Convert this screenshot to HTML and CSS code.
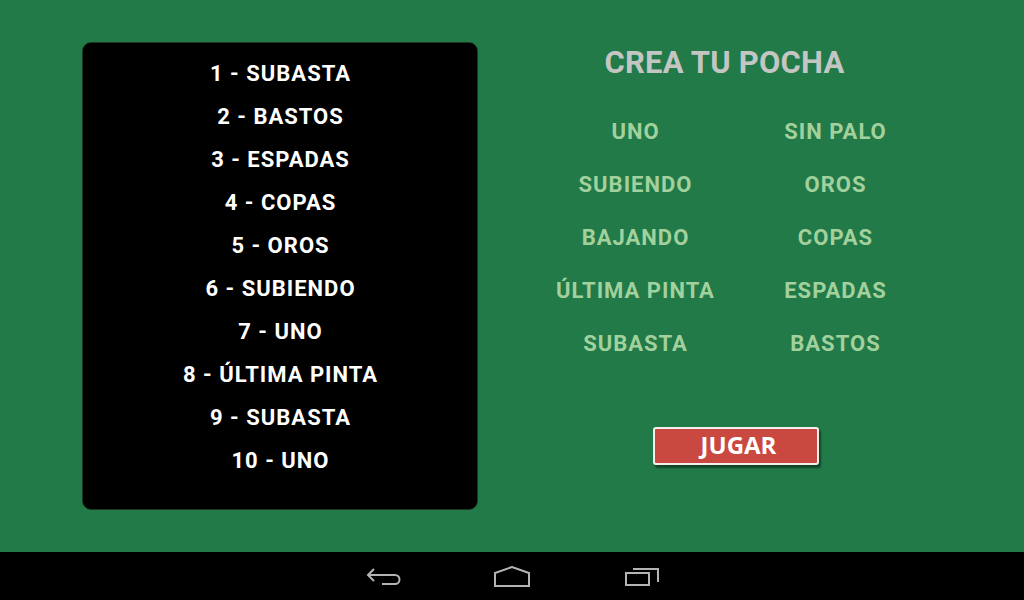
FILE: index.html
```html
<!DOCTYPE html>
<html lang="es">
<head>
<meta charset="utf-8">
<title>Crea tu pocha</title>
<link rel="stylesheet" href="styles.css">
</head>
<body>
<div class="screen">
  <main class="main">
    <section class="panel">
      <div class="item">1 - SUBASTA</div>
      <div class="item">2 - BASTOS</div>
      <div class="item">3 - ESPADAS</div>
      <div class="item">4 - COPAS</div>
      <div class="item">5 - OROS</div>
      <div class="item">6 - SUBIENDO</div>
      <div class="item">7 - UNO</div>
      <div class="item">8 - ÚLTIMA PINTA</div>
      <div class="item">9 - SUBASTA</div>
      <div class="item">10 - UNO</div>
    </section>
    <section class="side">
      <h1 class="title">CREA TU POCHA</h1>
      <div class="options">
        <div class="opt">UNO</div><div class="opt">SIN PALO</div>
        <div class="opt">SUBIENDO</div><div class="opt">OROS</div>
        <div class="opt">BAJANDO</div><div class="opt">COPAS</div>
        <div class="opt">ÚLTIMA PINTA</div><div class="opt">ESPADAS</div>
        <div class="opt">SUBASTA</div><div class="opt">BASTOS</div>
      </div>
      <div class="btn-row"><button class="play">JUGAR</button></div>
    </section>
  </main>
  <nav class="navbar">
    <svg class="nav-icon back" width="36" height="22" viewBox="0 0 36 22">
      <path d="M8 3 L2 9 L8 15 M2 9 H29 A4.5 4.5 0 0 1 29 18 H16" fill="none" stroke="#b4b4b4" stroke-width="2"/>
    </svg>
    <svg class="nav-icon home" width="40" height="22" viewBox="0 0 40 22">
      <path d="M3 7 L20 1 L37 7 V20 H3 Z" fill="none" stroke="#b4b4b4" stroke-width="2" stroke-linejoin="miter"/>
    </svg>
    <svg class="nav-icon recent" width="38" height="22" viewBox="0 0 38 22">
      <rect x="2" y="7" width="23" height="12" fill="none" stroke="#b4b4b4" stroke-width="2"/>
      <path d="M9 3 H34 V16" fill="none" stroke="#b4b4b4" stroke-width="2"/>
    </svg>
  </nav>
</div>
</body>
</html>
```

FILE: styles.css
```css
html, body {
  margin: 0;
  padding: 0;
}
body {
  width: 1024px;
  height: 600px;
  overflow: hidden;
  background: #217a48;
  font-family: Roboto, "Liberation Sans", sans-serif;
}
.screen {
  display: flex;
  flex-direction: column;
  height: 600px;
}
.main {
  height: 552px;
  display: flex;
  padding: 42px 0 0 82px;
  box-sizing: border-box;
}
.panel {
  width: 396px;
  height: 468px;
  box-sizing: border-box;
  background: #000;
  border: 1px solid #1a3a26;
  border-radius: 9px;
  padding-top: 9px;
  display: flex;
  flex-direction: column;
  align-items: center;
}
.item {
  color: #fff;
  font-weight: 700;
  font-size: 22px;
  letter-spacing: 1px;
  padding-left: 1px;
  line-height: 43px;
  height: 43px;
}
.side {
  width: 492px;
  display: flex;
  flex-direction: column;
}
.title {
  margin: 0;
  padding-top: 3px;
  padding-left: 1px;
  text-align: center;
  color: #c4c6c4;
  font-size: 31px;
  letter-spacing: 0.2px;
  font-weight: 700;
  line-height: 36px;
}
.options {
  margin-top: 24px;
  margin-left: 57px;
  width: 400px;
  display: grid;
  grid-template-columns: 200px 200px;
  grid-auto-rows: 53px;
}
.opt {
  text-align: center;
  line-height: 53px;
  padding-left: 1px;
  color: #a2d19d;
  font-size: 22px;
  letter-spacing: 1px;
  font-weight: 700;
}
.btn-row {
  margin-top: 57px;
  padding-left: 175px;
}
.play {
  width: 166px;
  height: 38px;
  box-sizing: border-box;
  background: #c9483f;
  border: 2px solid #f4f0ee;
  border-radius: 3px;
  box-shadow: 2px 3px 2px rgba(0, 0, 0, 0.45);
  color: #fff;
  font-family: "Open Sans", "DejaVu Sans", sans-serif;
  font-weight: 700;
  font-size: 24px;
  line-height: 30px;
  padding: 0 0 2px 5px;
}
.navbar {
  height: 48px;
  background: #000;
  display: flex;
  align-items: center;
  padding-left: 366px;
}
.nav-icon { display: block; }
.back { margin-right: 90px; margin-top: 2px; }
.home { margin-right: 92px; margin-top: 2px; }
.recent { margin-top: 2px; }
```
